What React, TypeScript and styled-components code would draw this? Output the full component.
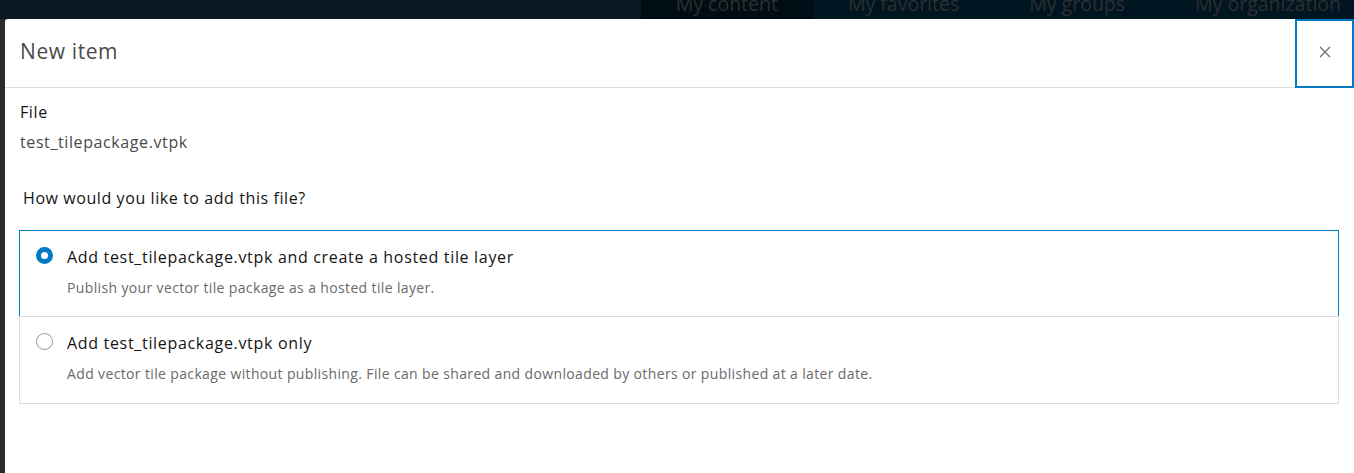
import React from 'react';
import styled, { createGlobalStyle } from 'styled-components';

const GlobalStyle = createGlobalStyle`
  html, body {
    margin: 0;
    padding: 0;
    background: #2b2b2b;
    overflow: hidden;
  }
  * {
    box-sizing: border-box;
  }
`;

const font = `"Open Sans", "Noto Sans", sans-serif`;

interface Option {
  title: string;
  description: string;
  checked: boolean;
}

const options: Option[] = [
  {
    title: 'Add test_tilepackage.vtpk and create a hosted tile layer',
    description: 'Publish your vector tile package as a hosted tile layer.',
    checked: true,
  },
  {
    title: 'Add test_tilepackage.vtpk only',
    description:
      'Add vector tile package without publishing. File can be shared and downloaded by others or published at a later date.',
    checked: false,
  },
];

const tabs = [
  { label: 'My content', active: true },
  { label: 'My favorites', active: false },
  { label: 'My groups', active: false },
  { label: 'My organization', active: false },
];

const App: React.FC = () => (
  <>
    <GlobalStyle />
    <Page>
      <TopBar>
        <Tabs>
          {tabs.map((t) => (
            <Tab key={t.label} active={t.active}>
              {t.label}
            </Tab>
          ))}
        </Tabs>
      </TopBar>
      <Main>
        <Gutter />
        <Modal>
          <Header>
            <Title>New item</Title>
            <CloseButton aria-label="Close">
              <svg width="12" height="12" viewBox="0 0 12 12">
                <path d="M1 1L11 11M11 1L1 11" stroke="#6a6a6a" strokeWidth="1.2" fill="none" />
              </svg>
            </CloseButton>
          </Header>
          <Body>
            <Label>File</Label>
            <FileName>test_tilepackage.vtpk</FileName>
            <Question>How would you like to add this file?</Question>
            <Cards>
              {options.map((o) => (
                <Card key={o.title} selected={o.checked}>
                  <Radio checked={o.checked} />
                  <CardText>
                    <CardTitle>{o.title}</CardTitle>
                    <CardDescription>{o.description}</CardDescription>
                  </CardText>
                </Card>
              ))}
            </Cards>
          </Body>
        </Modal>
      </Main>
    </Page>
  </>
);

const Page = styled('div')`
  width: 1354px;
  height: 473px;
  display: flex;
  flex-direction: column;
  font-family: ${font};
  overflow: hidden;
`;

const TopBar = styled('div')`
  height: 19px;
  flex: 0 0 19px;
  background: #0a1822;
  display: flex;
  justify-content: flex-end;
  overflow: hidden;
`;

const Tabs = styled('div')`
  display: flex;
  padding-right: 13px;
  background: #001522;
`;

const Tab = styled('div')<{ active: boolean }>`
  background: ${(p) => (p.active ? '#000d14' : '#001522')};
  color: #2e2e2e;
  font-size: 19.5px;
  line-height: 20px;
  padding: 0 35px;
  margin-top: -6px;
  height: 25px;
  white-space: nowrap;
  &:last-child {
    padding-right: 0;
  }
`;

const Main = styled('div')`
  flex: 1;
  display: flex;
`;

const Gutter = styled('div')`
  width: 5px;
  flex: 0 0 5px;
  background: #2b2b2b;
`;

const Modal = styled('div')`
  flex: 1;
  background: #fff;
  border-top-left-radius: 3px;
  display: flex;
  flex-direction: column;
`;

const Header = styled('div')`
  height: 69px;
  display: flex;
  align-items: stretch;
  border-bottom: 1px solid #dcdcdc;
`;

const Title = styled('h2')`
  flex: 1;
  margin: 0;
  padding-left: 15px;
  padding-bottom: 4px;
  display: flex;
  align-items: center;
  font-size: 21px;
  letter-spacing: 0.6px;
  font-weight: 400;
  color: #4a4a4a;
`;

const CloseButton = styled('button')`
  width: 59px;
  border: 2px solid #007ac2;
  background: #fff;
  display: flex;
  align-items: center;
  justify-content: center;
  padding: 0 0 4px 0;
  margin-bottom: -1px;
`;

const Body = styled('div')`
  padding: 14px 15px 0 14px;
  display: flex;
  flex-direction: column;
`;

const Label = styled('div')`
  font-size: 16px;
  letter-spacing: 0.6px;
  line-height: 20px;
  color: #151515;
  padding-left: 1px;
`;

const FileName = styled('div')`
  font-size: 16px;
  letter-spacing: 0.6px;
  line-height: 20px;
  color: #4a4a4a;
  margin-top: 10px;
  padding-left: 1px;
`;

const Question = styled('div')`
  font-size: 16px;
  letter-spacing: 0.58px;
  line-height: 20px;
  color: #151515;
  margin-top: 36px;
  padding-left: 4px;
`;

const Cards = styled('div')`
  margin-top: 22px;
  display: flex;
  flex-direction: column;
`;

const Card = styled('div')<{ selected: boolean }>`
  height: 87px;
  display: flex;
  align-items: flex-start;
  gap: 14px;
  padding: 15px 16px 0 16px;
  border: 1px solid ${(p) => (p.selected ? '#007ac2' : '#dcdcdc')};
  & + & {
    margin-top: -1px;
    height: 88px;
  }
`;

const Radio = styled('span')<{ checked: boolean }>`
  width: 17px;
  height: 17px;
  flex: 0 0 17px;
  border-radius: 50%;
  margin-top: 1px;
  border: ${(p) => (p.checked ? '5.5px solid #007ac2' : '1px solid #959595')};
  background: #fff;
`;

const CardText = styled('div')`
  display: flex;
  flex-direction: column;
`;

const CardTitle = styled('div')`
  font-size: 16px;
  letter-spacing: 0.68px;
  line-height: 22px;
  color: #151515;
`;

const CardDescription = styled('div')`
  font-size: 14px;
  letter-spacing: 0.36px;
  line-height: 18px;
  color: #6a6a6a;
  margin-top: 11px;
`;

export default App;
